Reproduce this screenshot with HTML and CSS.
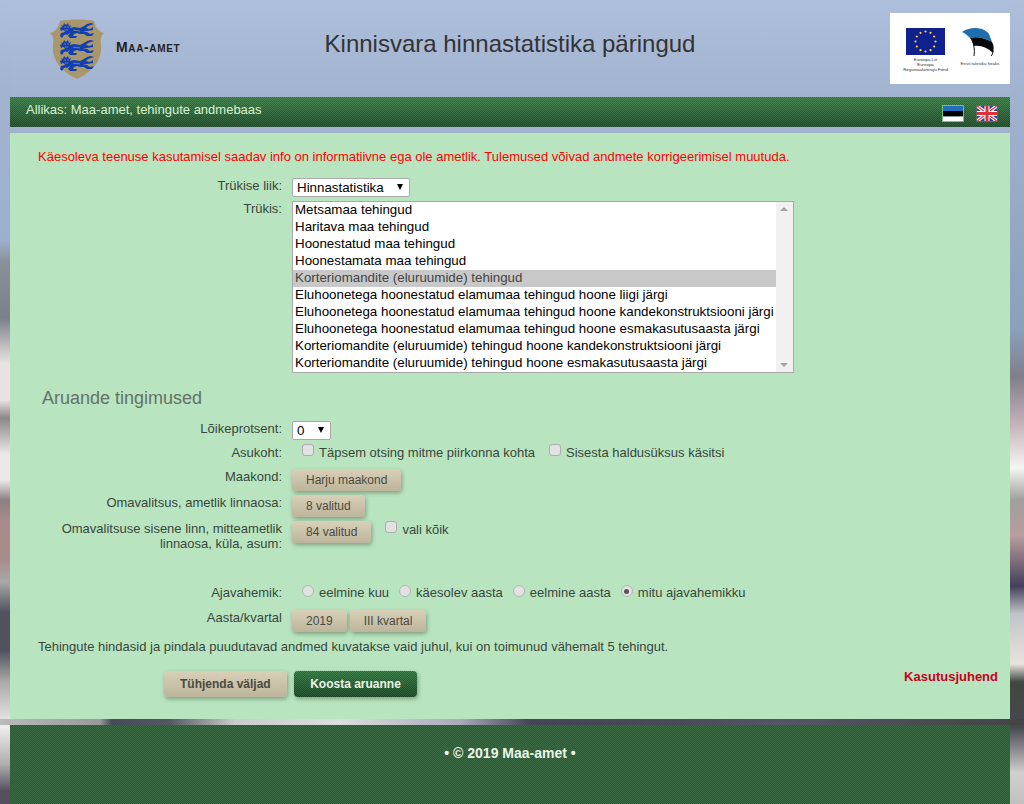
FILE: index.html
```html
<!DOCTYPE html>
<html lang="et">
<head>
<meta charset="utf-8">
<title>Kinnisvara hinnastatistika päringud</title>
<link rel="stylesheet" href="styles.css">
</head>
<body>
<svg class="defs" width="0" height="0" aria-hidden="true">
  <defs>
    <g id="lion" fill="#1040b4">
      <path d="M0 5 L2 4 L1 2 L3 3 L4 0 L6 2 L8 0 L9 3 L11 2 L10 5 L12 6 L10 8 L10 10 L7 12 L4 10 L5 8 L3 7 L1 8 Z"/>
      <path d="M10 5 L14 4 L20 5 L24 3 L27 1 L31 0 L34 1 L31 2 L28 3 L26 5 L30 6 L33 4 L33 7 L27 8 L23 9 L27 9 L30 11 L34 10 L32 13 L27 13 L24 11 L20 11 L17 10 L14 11 L13 13 L17 13 L16 15 L10 15 L8 13 L10 10 Z"/>
      <path d="M1 10 L5 9 L7 11 L4 12 L2 15 L0 13 Z"/>
      <path d="M4 4 H6 M7 4 H9 M13 7 L20 8 M5 7 H8" stroke="#a9966b" stroke-width=".7" fill="none"/>
    </g>
  </defs>
</svg>
<div class="page">
  <header class="masthead">
    <div class="brand">
      <svg class="crest" width="54" height="60" viewBox="0 0 54 60">
        <path d="M0 14 C5 13 9 8 10 2 C18 0 36 0 44 2 C45 8 49 13 54 14 C51 17 50 20 51 26 C52 38 47 50 27 60 C7 50 2 38 3 26 C4 20 3 17 0 14 Z" fill="#a9966b"/>
        <use href="#lion" x="10" y="4"/>
        <use href="#lion" x="10" y="21"/>
        <use href="#lion" x="10" y="37"/>
      </svg>
      <span class="brand-name">Maa-amet</span>
    </div>
    <h1 class="title">Kinnisvara hinnastatistika päringud</h1>
    <div class="eu-wrap">
      <div class="eu-box">
        <div class="eu-col">
          <svg width="39" height="27" viewBox="0 0 39 27">
            <rect width="39" height="27" fill="#10208c"/>
            <g fill="#ffe020">
              <circle cx="19.5" cy="3.5" r="1.1"/><circle cx="24.5" cy="4.8" r="1.1"/><circle cx="28.2" cy="8.5" r="1.1"/>
              <circle cx="29.5" cy="13.5" r="1.1"/><circle cx="28.2" cy="18.5" r="1.1"/><circle cx="24.5" cy="22.2" r="1.1"/>
              <circle cx="19.5" cy="23.5" r="1.1"/><circle cx="14.5" cy="22.2" r="1.1"/><circle cx="10.8" cy="18.5" r="1.1"/>
              <circle cx="9.5" cy="13.5" r="1.1"/><circle cx="10.8" cy="8.5" r="1.1"/><circle cx="14.5" cy="4.8" r="1.1"/>
            </g>
          </svg>
          <p class="eu-text">Euroopa Liit<br>Euroopa<br>Regionaalarengu Fond</p>
        </div>
        <div class="eu-col eesti">
          <svg width="34" height="31" viewBox="0 0 34 31">
            <path d="M1 4 C5 1 10 0 14 0 C20 0 25 2 28 6 L31 14 C24 10 15 8 9 10 C6 7 4 5 1 4 Z" fill="#1f6fb0"/>
            <path d="M9 10 C15 8 24 10 31 14 C33 17 33 21 32 25 C27 20 20 17 13 18 C12 15 11 12 9 10 Z" fill="#0a0a0a"/>
            <path d="M11 12 C13 17 14 22 13 28 M32 23 C32 25 31 27 30 28" fill="none" stroke="#111" stroke-width="1"/>
          </svg>
          <p class="eu-text">Eesti tuleviku heaks</p>
        </div>
      </div>
    </div>
  </header>

  <nav class="source-bar">
    <span class="source-text">Allikas: Maa-amet, tehingute andmebaas</span>
    <div class="flags">
      <svg class="flag" width="22" height="17" viewBox="0 0 22 17">
        <rect width="22" height="6" fill="#1f6fc0"/><rect y="6" width="22" height="5.5" fill="#000"/><rect y="11.5" width="22" height="5.5" fill="#fff"/>
        <rect x=".5" y=".5" width="21" height="16" fill="none" stroke="#6fc46f"/>
      </svg>
      <svg class="flag" width="22" height="17" viewBox="0 0 22 17">
        <rect width="22" height="17" fill="#2a3f8f"/>
        <path d="M0 0 L22 17 M22 0 L0 17" stroke="#fff" stroke-width="3.4"/>
        <path d="M0 0 L22 17 M22 0 L0 17" stroke="#e0303a" stroke-width="1.2"/>
        <path d="M11 0 V17 M0 8.5 H22" stroke="#fff" stroke-width="5"/>
        <path d="M11 0 V17 M0 8.5 H22" stroke="#e0303a" stroke-width="3"/>
        <rect x=".5" y=".5" width="21" height="16" fill="none" stroke="#5d6b5d"/>
      </svg>
    </div>
  </nav>

  <main class="panel">
    <p class="notice">Käesoleva teenuse kasutamisel saadav info on informatiivne ega ole ametlik. Tulemused võivad andmete korrigeerimisel muutuda.</p>

    <div class="row row-type">
      <label class="lbl">Trükise liik:</label>
      <div class="ctrl"><span class="select-box select-wide">Hinnastatistika</span></div>
    </div>
    <div class="row row-list">
      <label class="lbl">Trükis:</label>
      <div class="ctrl">
        <div class="listbox">
          <ul class="options">
            <li>Metsamaa tehingud</li>
            <li>Haritava maa tehingud</li>
            <li>Hoonestatud maa tehingud</li>
            <li>Hoonestamata maa tehingud</li>
            <li class="selected">Korteriomandite (eluruumide) tehingud</li>
            <li>Eluhoonetega hoonestatud elamumaa tehingud hoone liigi järgi</li>
            <li>Eluhoonetega hoonestatud elamumaa tehingud hoone kandekonstruktsiooni järgi</li>
            <li>Eluhoonetega hoonestatud elamumaa tehingud hoone esmakasutusaasta järgi</li>
            <li>Korteriomandite (eluruumide) tehingud hoone kandekonstruktsiooni järgi</li>
            <li>Korteriomandite (eluruumide) tehingud hoone esmakasutusaasta järgi</li>
          </ul>
          <div class="scrollbar"><i class="arrow-up"></i><i class="arrow-down"></i></div>
        </div>
      </div>
    </div>

    <h2 class="section-title">Aruande tingimused</h2>

    <div class="row row-percent">
      <label class="lbl">Lõikeprotsent:</label>
      <div class="ctrl"><span class="select-box select-narrow">0</span></div>
    </div>
    <div class="row row-place">
      <label class="lbl">Asukoht:</label>
      <div class="ctrl ctrl-inline ctrl-checks">
        <span class="opt"><i class="check"></i>Täpsem otsing mitme piirkonna kohta</span>
        <span class="opt"><i class="check"></i>Sisesta haldusüksus käsitsi</span>
      </div>
    </div>
    <div class="row row-county">
      <label class="lbl">Maakond:</label>
      <div class="ctrl"><button class="btn" type="button">Harju maakond</button></div>
    </div>
    <div class="row row-muni">
      <label class="lbl">Omavalitsus, ametlik linnaosa:</label>
      <div class="ctrl"><button class="btn" type="button">8 valitud</button></div>
    </div>
    <div class="row row-settle">
      <label class="lbl">Omavalitsuse sisene linn, mitteametlik linnaosa, küla, asum:</label>
      <div class="ctrl ctrl-inline">
        <button class="btn" type="button">84 valitud</button>
        <span class="opt opt-all"><i class="check"></i>vali kõik</span>
      </div>
    </div>
    <div class="row row-period">
      <label class="lbl">Ajavahemik:</label>
      <div class="ctrl ctrl-inline ctrl-radios">
        <span class="opt"><i class="radio"></i>eelmine kuu</span>
        <span class="opt"><i class="radio"></i>käesolev aasta</span>
        <span class="opt"><i class="radio"></i>eelmine aasta</span>
        <span class="opt"><i class="radio radio-on"></i>mitu ajavahemikku</span>
      </div>
    </div>
    <div class="row row-quarter">
      <label class="lbl">Aasta/kvartal</label>
      <div class="ctrl ctrl-btns">
        <button class="btn" type="button">2019</button>
        <button class="btn" type="button">III kvartal</button>
      </div>
    </div>
    <p class="info">Tehingute hindasid ja pindala puudutavad andmed kuvatakse vaid juhul, kui on toimunud vähemalt 5 tehingut.</p>
    <div class="actions">
      <button class="btn btn-big" type="button">Tühjenda väljad</button>
      <button class="btn btn-big btn-green" type="button">Koosta aruanne</button>
      <a class="help" href="#">Kasutusjuhend</a>
    </div>
  </main>

  <footer class="footer">• © 2019 Maa-amet •</footer>
</div>
</body>
</html>
```
FILE: styles.css
```css
* { box-sizing: border-box; }
html, body { margin: 0; padding: 0; height: 804px; overflow: hidden; }
body {
  font-family: "Liberation Sans", Arial, sans-serif;
  font-size: 13px;
  color: #3a463c;
  background-color: #a2b3d0;
  background-repeat: no-repeat;
  background-image:
    linear-gradient(to right, #bbb 0, #aaa 50px, #999 100px, #444a58 112px, #555862 170px, #ccc 235px, #ddd 340px, #aab 460px, #445 530px, #4a4a58 680px, #556 780px, #444 1024px),
    linear-gradient(to bottom, #aebfdb 0, #a2b3d0 90px, #9cb0cc 240px, #8a8f98 263px, #7b808b 318px, #e8e3e0 363px, #e8e3e0 400px, #8b868a 418px, #ece8e8 454px, #ece8e8 480px, #8e8080 500px, #a88c8c 522px, #a88c8c 559px, #a8a8a8 582px, #50525c 613px, #50525c 650px, #aaa 682px, #eee 727px, #b0aeb0 764px, #554f60 791px),
    linear-gradient(to bottom, #aebfdb 0, #a2b3d0 90px, #8aa0bb 330px, #807f88 377px, #c0b0b8 422px, #f4f6f2 468px, #a0a09c 500px, #b89c9e 536px, #45405a 586px, #c0c4c8 614px, #e8e4dc 664px, #404840 682px, #484850 727px, #d0d0d0 773px, #c0c0c0 804px);
  background-size: 100% 6px, 10px 804px, 14px 804px;
  background-position: 0 719px, 0 0, 100% 0;
}
.defs { position: absolute; }
.page { width: 1000px; margin: 0 10px; }

.masthead { height: 97px; display: grid; grid-template-columns: 1fr auto 1fr; align-items: start; background: linear-gradient(to bottom, #aebfdb, #a2b3d0); }
.brand { display: flex; align-items: center; gap: 12px; padding: 19px 0 0 40px; }
.crest { display: block; flex: none; }
.brand-name { font-variant: small-caps; font-weight: bold; font-size: 14px; letter-spacing: .65px; color: #222; margin-top: -5px; }
.title { margin: 30px 0 0; font-size: 24px; line-height: 28px; font-weight: normal; color: #333; }
.eu-wrap { display: flex; justify-content: flex-end; padding-top: 13px; }
.eu-box { width: 120px; height: 71px; background: #fff; display: flex; padding: 15px 0 0 13.5px; gap: 12.5px; }
.eu-col { display: flex; flex-direction: column; align-items: center; width: 44px; flex: none; }
.eu-col svg { display: block; }
.eu-text { margin: 2px 0 0; font-size: 4.4px; line-height: 5px; text-align: center; color: #333; white-space: nowrap; }
.eesti { width: 40px; }
.eesti svg { margin-right: 4px; }
.eesti .eu-text { margin-top: 2px; }

.source-bar {
  height: 30px; display: flex; justify-content: space-between; padding: 8px 12px 0 16px;
  background-image:
    repeating-conic-gradient(rgba(255,255,255,.08) 0 25%, rgba(0,0,0,.12) 0 50%),
    linear-gradient(to bottom, #3c8048, #214f2b);
  background-size: 2px 2px, auto;
}
.source-text { font-size: 13px; line-height: 15px; margin-top: -3px; color: #d8f2d0; }
.flags { display: flex; gap: 12px; }
.flag { display: block; }

.panel { margin-top: 6px; height: 586px; background: #b8e5c0; padding: 16px 12px 0 28px; position: relative; }
.notice { margin: 0; font-size: 13px; line-height: 16px; color: #f00; }

.row { display: grid; grid-template-columns: 244px 1fr; column-gap: 10px; }
.lbl { text-align: right; font-size: 13px; line-height: 15px; color: #3a463c; }
.ctrl { min-width: 0; }
.ctrl-inline { display: flex; align-items: flex-start; }
.ctrl-btns { display: flex; gap: 3px; }

.select-box { display: block; position: relative; height: 19px; background: #fff; border: 1px solid #a9a9a9; border-radius: 2px; font-size: 13.33px; line-height: 17px; padding-left: 4px; color: #000; }
.select-box::after { content: ""; position: absolute; top: 5px; right: 6px; border: 3.5px solid transparent; border-top: 6px solid #000; border-bottom: 0; }
.select-wide { width: 118px; }
.select-narrow { width: 39px; }

.row-type { margin-top: 13px; }
.row-list { margin-top: 4px; }
.listbox { width: 502px; height: 172px; background: #fff; border: 1px solid #a9a9a9; display: flex; }
.options { list-style: none; margin: 0; padding: 0; flex: 1; min-width: 0; }
.options li { height: 17px; font-size: 13.33px; line-height: 15px; padding-left: 2px; color: #000; white-space: nowrap; }
.options li.selected { background: #c8c8c8; color: #444; }
.scrollbar { width: 17px; background: #f1f1f1; position: relative; flex: none; }
.arrow-up, .arrow-down { position: absolute; left: 4px; border: 4px solid transparent; }
.arrow-up { top: 5px; border-bottom: 4px solid #a3a3a3; border-top: 0; }
.arrow-down { bottom: 5px; border-top: 4px solid #a3a3a3; border-bottom: 0; }

.section-title { margin: 15px 0 0 4px; font-size: 18px; line-height: 20px; font-weight: normal; color: #667068; }

.row-percent { margin-top: 13px; }
.row-place { margin-top: 5px; }
.row-county { margin-top: 9px; }
.row-muni { margin-top: 4px; }
.row-settle { margin-top: 4px; }
.row-period { margin-top: 34px; }
.row-quarter { margin-top: 10px; }

.opt { display: inline-flex; align-items: flex-start; font-size: 13px; line-height: 15px; color: #3a463c; }
.check { display: block; width: 12px; height: 12px; margin: -1px 5px 0 0; background: #e2e2e2; border: 1px solid #adadad; border-radius: 3px; flex: none; }
.radio { display: block; width: 12px; height: 12px; margin: 0 5px 0 0; background: #e2e2e2; border: 1px solid #b4b4b4; border-radius: 50%; flex: none; position: relative; }
.radio-on::after { content: ""; position: absolute; left: 2.5px; top: 2.5px; width: 5px; height: 5px; border-radius: 50%; background: #555; }
.ctrl-checks { padding-left: 10px; gap: 14px; }
.ctrl-radios { padding-left: 10px; gap: 10px; }
.opt-all { margin: 1px 0 0 14px; }

.btn { display: inline-block; height: 22px; padding: 0 14px; border: 0; border-radius: 4px; font-family: inherit; font-size: 12px; line-height: 22px; color: #4a4a40; background: linear-gradient(to bottom, #d9d0b8, #bdb49c); box-shadow: 1px 2px 4px rgba(60,70,50,.45); }
.btn-big { height: 26px; padding: 0 16px; font-weight: bold; line-height: 24px; }
.btn-green {
  padding: 0 16.5px;
  color: #eaf3e6;
  background-image:
    repeating-conic-gradient(rgba(255,255,255,.08) 0 25%, rgba(0,0,0,.12) 0 50%),
    linear-gradient(to bottom, #337a40, #1c4a26);
  background-size: 2px 2px, auto;
}

.info { margin: 7px 0 0; font-size: 13px; line-height: 15px; color: #3a463c; }
.actions { display: flex; gap: 7px; margin: 17px 0 0 126px; align-items: flex-start; }
.help { margin-left: auto; margin-top: -2px; font-weight: bold; font-size: 13px; line-height: 15px; color: #c8001e; text-decoration: none; }

.footer {
  margin-top: 6px; height: 79px; padding-top: 20px; text-align: center; font-weight: bold; font-size: 14px; line-height: 16px; color: #eef3ea;
  background-image:
    repeating-conic-gradient(rgba(255,255,255,.05) 0 25%, rgba(0,0,0,.07) 0 50%),
    linear-gradient(#30613a, #30613a);
  background-size: 2px 2px, auto;
}
```
